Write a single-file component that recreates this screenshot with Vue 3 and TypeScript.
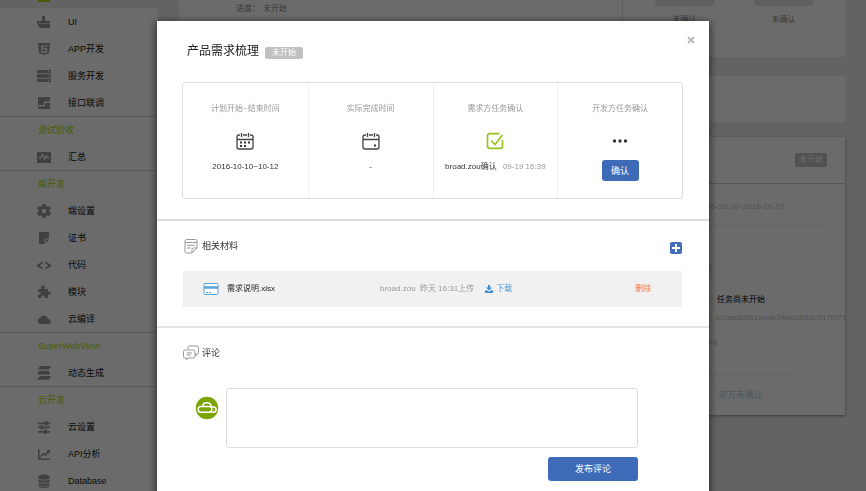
<script setup lang="ts">
import { ref } from 'vue'

interface NavItem {
  label: string
  icon: string
}

interface NavGroup {
  title?: string
  items: NavItem[]
}

const groups: NavGroup[] = [
  {
    items: [
      { label: 'UI', icon: 'M5 1h3v5h5v3H0V6h5zM1 8.500h12v4.500H4L1 11z' },
      { label: 'APP开发', icon: 'M1 1h12l-1 10-5 2-5-2zM4 3.400l.4 4.200h4.400l-.2 1.700L7 9.800l-1.500-.5-.1-.8H4l.2 1.900L7 11.300l2.900-.9.4-4.100H5.700L5.600 4.800h4.800l.1-1.400z' },
      { label: '服务开发', icon: 'M0 1h14v3.300H0zM0 5.300h14v3.400H0zM0 9.700h14V13H0zM11 2.100v1h1.200v-1zM11 6.500v1h1.200v-1zM11 10.900v1h1.200v-1z' },
      { label: '接口联调', icon: 'M1 1h12v4.500H7V9H1zM8 7h5v6H1v-2.500h7z' },
    ],
  },
  {
    title: '测试验收',
    items: [{ label: '汇总', icon: 'M0 2h14v11H0zM2 7v1.200h2.300l1.200-2.400 2.300 4.700L9.500 7l.7 1.200H12V7h-1.200L9.300 4.600 7.800 7.800 5.500 3.500 3.600 7z' }],
  },
  {
    title: '端开发',
    items: [
      { label: '端设置', icon: 'M5.500 0h3l.5 2 1.300.8 2-.7L14 4.700l-1.600 1.500v1.600L14 9.300l-1.700 2.600-2-.7-1.300.8-.5 2h-3L5 12l-1.300-.8-2 .7L0 9.300l1.600-1.500V6.200L0 4.700l1.700-2.600 2 .7L5 2zM7 4.700a2.300 2.300 0 1 0 0 4.600 2.300 2.300 0 0 0 0-4.600z' },
      { label: '证书', icon: 'M2 1h10v6.500H7.500V13H2zM8.500 8.500H12L8.500 12.500z' },
      { label: '代码', icon: 'M5.700 3.500v1.800L2.500 7.500l3.200 2.200v1.800L0 8.200V6.800zM8.300 3.500v1.800l3.200 2.200-3.200 2.200v1.800L14 8.200V6.800z' },
      { label: '模块', icon: 'M1 4h3.500C3.300 1.500 4.600.5 6 .5s2.700 1 1.500 3.500H11v3c2-.8 3-.1 3 1.200s-1 2.200-3 1.300V13H7.500c.5-2-.3-2.600-1.500-2.600S4 11 4.500 13H1V9.500c2 .6 2.600-.2 2.600-1.300S3 6.500 1 7z' },
      { label: '云编译', icon: 'M3 12a3 3 0 0 1-.4-5.800A4.500 4.500 0 0 1 11 7a2.500 2.500 0 0 1 .4 5z' },
    ],
  },
  {
    title: 'SuperWebView',
    items: [{ label: '动态生成', icon: 'M3 0h11l-2 3.500H1zM2 5h10l1 3.500H1.500L0 7.800zM3 10h11l-2 3.700H0z' }],
  },
  {
    title: '云开发',
    items: [
      { label: '云设置', icon: 'M1 2.500h7V1h2.500v1.500H13v1.700h-2.500v1.300H8V4.200H1zM1 6.500h2.500V5.200H6v1.300h7v1.700H6v1.300H3.500V8.200H1zM1 11h6V9.500h2.500V11H13v1.700H9.500V14H7v-1.300H1z' },
      { label: 'API分析', icon: 'M1 2h1.600v9.500H13V13H1zM3.200 9l3-3.500 2 1.600 2.300-3L9.300 3H13v4l-1.300-1.500-3.200 4-2.200-1.700-3.100 3z' },
      { label: 'Database', icon: 'M1.500 3c0-3.300 11-3.300 11 0v1c0 2-11 2-11 0zM1.500 5.300c2 1.700 9 1.700 11 0v1.900c0 2-11 2-11 0zM1.500 8.500c2 1.700 9 1.700 11 0v1.800c0 2-11 2-11 0zM1.500 11.500c2 1.400 9 1.400 11 0v.8c0 2.200-11 2.200-11 0z' },
    ],
  },
]

const comment = ref('')
</script>

<template>
  <div class="page">
    <nav class="sidebar">
      <a href="#" class="row active">
        <svg viewBox="0 0 14 14"><path d="M1 1h12v12H1z" /></svg><span></span>
      </a>
      <section v-for="(group, i) in groups" :key="i" class="group">
        <h3 v-if="group.title">{{ group.title }}</h3>
        <a v-for="item in group.items" :key="item.label" href="#" class="row">
          <svg viewBox="0 0 14 14"><path fill-rule="evenodd" :d="item.icon" /></svg>
          <span>{{ item.label }}</span>
        </a>
      </section>
    </nav>

    <main class="content">
      <section class="card summary">
        <p class="progress"><span>进度：</span><span>未开始</span></p>
        <div class="states">
          <div v-for="n in 2" :key="n" class="state"><i></i><span>未确认</span></div>
        </div>
      </section>
      <section class="card strip"></section>
      <section class="card stage">
        <header><span class="tag">未开始</span></header>
        <div class="stage-body">
          <p class="date">2016-10-16~2016-10-17</p>
          <p class="talk">评论</p>
          <p class="notice">任务尚未开始</p>
          <p class="hash">fd1aadb661bd4e34fa3cb63c517fd71-</p>
          <p class="file">og</p>
          <p class="both">双方未确认</p>
        </div>
      </section>
    </main>

    <div class="backdrop">
      <div class="modal" role="dialog" aria-labelledby="task-title">
        <section class="overview">
          <header class="title-bar">
            <h1 id="task-title">产品需求梳理</h1>
            <span class="tag">未开始</span>
            <button type="button" class="close" aria-label="关闭">
              <svg viewBox="0 0 8 8"><path d="M1 1l6 6M7 1L1 7" /></svg>
            </button>
          </header>
          <div class="steps">
            <div class="step">
              <h4>计划开始~结束时间</h4>
              <svg class="glyph" viewBox="0 0 18 18">
                <path d="M4 3H3a2 2 0 0 0-2 2v10a2 2 0 0 0 2 2h12a2 2 0 0 0 2-2V5a2 2 0 0 0-2-2h-1M7 3h4M5.500 1v4M12.500 1v4M1 7.500h16" />
                <path class="solid" d="M4 9.500h2v2H4zM8 9.500h2v2H8zM12 9.500h2v2h-2zM4 13h2v2H4zM8 13h2v2H8z" />
              </svg>
              <p>2016-10-10~10-12</p>
            </div>
            <div class="step">
              <h4>实际完成时间</h4>
              <svg class="glyph" viewBox="0 0 18 18">
                <path d="M4 3H3a2 2 0 0 0-2 2v10a2 2 0 0 0 2 2h12a2 2 0 0 0 2-2V5a2 2 0 0 0-2-2h-1M7 3h4M5.500 1v4M12.500 1v4M1 7.500h16" />
                <path class="solid" d="M12 12.500h2v2h-2z" />
              </svg>
              <p>-</p>
            </div>
            <div class="step">
              <h4>需求方任务确认</h4>
              <svg class="glyph check" viewBox="0 0 18 18">
                <path d="M13.500 1.700H3.500a2 2 0 0 0-2 2v10.600a2 2 0 0 0 2 2h11a2 2 0 0 0 2-2V8" />
                <path d="M5 8.500l4 4L16.500 3" />
              </svg>
              <p>broad.zou确认 <time>09-19 16:39</time></p>
            </div>
            <div class="step">
              <h4>开发方任务确认</h4>
              <svg class="glyph" viewBox="0 0 18 18">
                <g class="solid"><circle cx="3.500" cy="9" r="1.700" /><circle cx="9" cy="9" r="1.700" /><circle cx="14.500" cy="9" r="1.700" /></g>
              </svg>
              <button type="button" class="primary confirm">确认</button>
            </div>
          </div>
        </section>

        <section class="materials">
          <header class="section-head">
            <svg viewBox="0 0 16 16">
              <path d="M14 10V3a1.500 1.500 0 0 0-1.500-1.500h-9A1.500 1.500 0 0 0 2 3v10.500A1.500 1.500 0 0 0 3.500 15H9zM9 15v-3.500A1.500 1.500 0 0 1 10.500 10H14M2 4.500h12M4 7.300h8M4 10h4" />
            </svg>
            <h2>相关材料</h2>
            <button type="button" class="add" aria-label="添加材料">
              <svg viewBox="0 0 12 12"><path d="M6 2v8M2 6h8" /></svg>
            </button>
          </header>
          <div class="file-row">
            <svg class="doc" viewBox="0 0 16 14">
              <rect x="1" y="1.500" width="14" height="11" rx="1" fill="#fff" />
              <path d="M1 5.500h14" class="thick" /><path d="M3 10.500h2M6 10.500h2" />
            </svg>
            <span class="name">需求说明.xlsx</span>
            <span class="meta">broad.zou&nbsp; 昨天 16:31上传</span>
            <a href="#" class="download">
              <svg viewBox="0 0 10 10"><path d="M3.700 0h2.600v3H9L5 7 1 3h2.700zM0 6.500h2.500L5 8.500l2.500-2H10V10H0z" /></svg>下载
            </a>
            <button type="button" class="remove">删除</button>
          </div>
        </section>

        <section class="comments">
          <header class="section-head">
            <svg viewBox="0 0 16 16">
              <path d="M5 4V2.500A1.500 1.500 0 0 1 6.500 1H14a1.500 1.500 0 0 1 1.500 1.500v5A1.500 1.500 0 0 1 14 9h-.5v1.500L12 9" />
              <path d="M2 5h8.500A1.500 1.500 0 0 1 12 6.500v5a1.500 1.500 0 0 1-1.500 1.500H5l-1.700 2V13H2a1.500 1.500 0 0 1-1.500-1.500v-5A1.500 1.500 0 0 1 2 5zM3.500 8H9M3.500 10H8" />
            </svg>
            <h2>评论</h2>
          </header>
          <form class="composer" @submit.prevent>
            <svg class="avatar" viewBox="0 0 24 24">
              <circle cx="12" cy="12" r="12" fill="#7aa505" />
              <path d="M6 10.500h8a2.800 2.800 0 0 1 0 5.700H6a2.800 2.800 0 0 1 0-5.700zM7.500 10.500C8 5.500 16 5.500 16.500 11.200M16 11h2.500a2.500 2.500 0 0 1 0 5.200H16.500" />
            </svg>
            <textarea v-model="comment" aria-label="评论内容"></textarea>
            <button type="submit" class="primary publish">发布评论</button>
          </form>
        </section>
      </div>
    </div>
  </div>
</template>

<style>
body {
  margin: 0;
  overflow: hidden;
}
</style>

<style scoped>
.page,
.page * {
  box-sizing: border-box;
}
.page {
  display: flex;
  height: 100vh;
  overflow: hidden;
  background: #e9efed;
  font-family: 'Liberation Sans', 'Noto Sans CJK SC', sans-serif;
  font-size: 8px;
  line-height: 12px;
  color: #333;
}
h1,
h2,
h3,
h4,
p {
  margin: 0;
  font-weight: 400;
}
a {
  text-decoration: none;
}
button {
  padding: 0;
  border: 0;
  background: none;
  font: inherit;
  cursor: pointer;
}
svg {
  display: block;
  flex: none;
}

.sidebar {
  flex: 0 0 158px;
  background: #fff;
  font-size: 9px;
}
.row {
  display: flex;
  align-items: center;
  gap: 17px;
  height: 27px;
  padding-left: 37px;
  color: #111;
}
.row svg {
  width: 14px;
  height: 14px;
  fill: #999;
}
.row.active {
  margin-top: -19px;
  background: #e9efed;
}
.row.active svg {
  margin-top: 2px;
  fill: #a5d600;
}
.group + .group {
  border-top: 1px solid #d0d0d0;
}
h3 {
  height: 26px;
  padding-left: 38px;
  font-size: 9px;
  line-height: 27px;
  color: #b0e000;
}

.content {
  flex: 1;
  min-width: 0;
  padding: 0 21px;
}
.card {
  background: #fff;
}
.summary {
  display: flex;
  height: 57px;
  margin-bottom: 19px;
  color: #888;
}
.progress {
  flex: 1;
  display: flex;
  gap: 3px;
  padding: 3px 0 0 57px;
}
.states {
  display: flex;
  gap: 40px;
  padding: 0 32px;
  border-left: 1px solid #ddd;
}
.state {
  width: 59px;
  text-align: center;
}
.state i {
  display: block;
  height: 6px;
  margin-bottom: 8px;
  border-radius: 0 0 3px 3px;
  background: #dfe6e4;
}
.strip {
  height: 46px;
  margin-bottom: 15px;
}
.stage {
  height: 278px;
  box-shadow: 0 1px 3px rgba(0, 0, 0, 0.4);
}
.stage header {
  display: flex;
  align-items: center;
  justify-content: flex-end;
  height: 47px;
  padding: 0 18px;
  border-bottom: 1px solid #d0d0d0;
}
.tag {
  height: 12px;
  padding: 0 7px;
  border-radius: 2px;
  background: #c0c0c0;
  color: #fff;
}
.stage .tag {
  height: 14px;
  padding: 1px 4px;
}
.stage-body {
  display: flex;
  flex-direction: column;
  align-items: flex-end;
  padding-right: 18px;
  color: #c4c4c4;
  white-space: nowrap;
}
.date {
  align-self: stretch;
  padding: 17px 43px 12px 0;
  border-bottom: 1px solid #ececec;
  text-align: right;
}
.talk {
  margin: 38px 114px 18px 0;
}
.notice {
  margin: 0 62px 6px 0;
  color: #000;
}
.hash {
  margin: 0 -22px 12px 0;
}
.file {
  margin: 0 110px 26px 0;
}
.both {
  align-self: stretch;
  margin-right: 36px;
  padding: 14px 28px 0 0;
  border-top: 1px solid #ececec;
  font-size: 9px;
  text-align: right;
  color: #b4d3e8;
}

.backdrop {
  position: fixed;
  inset: 0;
  overflow: hidden;
  background: rgba(0, 0, 0, 0.58);
}
.modal {
  width: 100%;
  max-width: 552px;
  min-height: 100vh;
  margin: 21px auto 0;
  background: #fff;
  box-shadow: 0 2px 8px 1px rgba(0, 0, 0, 0.6);
}
.overview {
  padding: 23px 26px 20px 25px;
  border-bottom: 2px solid #ddd;
}
.title-bar {
  display: flex;
  align-items: center;
  gap: 6px;
  height: 15px;
  margin-bottom: 23px;
  padding-left: 5px;
}
h1 {
  font-size: 12px;
  line-height: 15px;
  color: #222;
}
.title-bar .tag {
  margin-top: 2px;
}
.close {
  align-self: flex-start;
  margin: -8px -12px 0 auto;
}
.close svg {
  width: 8px;
  height: 8px;
  stroke: #bbb;
  stroke-width: 2;
}
.steps {
  display: grid;
  grid-template-columns: repeat(4, 1fr);
  height: 117px;
  border: 1px solid #ddd;
  border-radius: 3px;
}
.step {
  display: flex;
  flex-direction: column;
  align-items: center;
  padding-top: 20px;
}
.step + .step {
  border-left: 1px solid #eee;
}
h4 {
  margin-bottom: 17px;
  font-size: 8px;
  color: #999;
}
.glyph {
  width: 18px;
  height: 18px;
  margin-bottom: 11px;
  fill: none;
  stroke: #444;
  stroke-width: 1.3;
}
.glyph .solid {
  fill: #333;
  stroke: none;
}
.glyph.check {
  stroke: #99c418;
  stroke-width: 1.7;
}
.step time {
  margin-left: 4px;
  color: #999;
}
.primary {
  border-radius: 3px;
  background: #3d6bb8;
  font-size: 9px;
  color: #fff;
}
.confirm {
  width: 37px;
  height: 21px;
  margin-top: -1px;
}

.materials {
  padding: 16px 27px 19px 26px;
  border-bottom: 2px solid #e4e4e4;
}
.section-head {
  display: flex;
  align-items: center;
  gap: 3px;
  height: 18px;
}
.section-head > svg {
  width: 16px;
  height: 16px;
  fill: none;
  stroke: #999;
}
h2 {
  font-size: 9px;
  color: #333;
}
.add {
  margin: 3px 0 0 auto;
  border-radius: 2px;
  background: #416fbd;
}
.add svg {
  width: 12px;
  height: 12px;
  stroke: #fff;
  stroke-width: 2;
}
.file-row {
  display: flex;
  align-items: center;
  height: 36px;
  margin-top: 16px;
  padding: 0 31px 0 20px;
  background: #f1f1f1;
}
.doc {
  width: 16px;
  height: 14px;
  fill: none;
  stroke: #58a3de;
}
.doc .thick {
  stroke-width: 2.5;
}
.name {
  flex: 0 1 153px;
  margin-left: 8px;
  color: #222;
}
.meta {
  color: #999;
}
.download {
  display: flex;
  align-items: center;
  gap: 3px;
  margin-left: 11px;
  color: #489cde;
}
.download svg {
  width: 8px;
  height: 8px;
  fill: #3f8fd0;
}
.remove {
  margin-left: auto;
  color: #ff7440;
}

.comments {
  padding: 16px 27px 16px 26px;
}
.composer {
  display: grid;
  grid-template-columns: 24px minmax(0, 412px);
  gap: 9px 7px;
  margin-top: 26px;
  padding-left: 12px;
}
.avatar {
  width: 24px;
  height: 24px;
  margin-top: 8px;
  fill: none;
  stroke: #fff;
  stroke-width: 1.5;
}
textarea {
  display: block;
  width: 100%;
  height: 60px;
  padding: 6px;
  border: 1px solid #ddd;
  border-radius: 3px;
  outline: 0;
  resize: none;
  font: inherit;
}
.publish {
  grid-column: 2;
  justify-self: end;
  width: 90px;
  height: 24px;
}
</style>
